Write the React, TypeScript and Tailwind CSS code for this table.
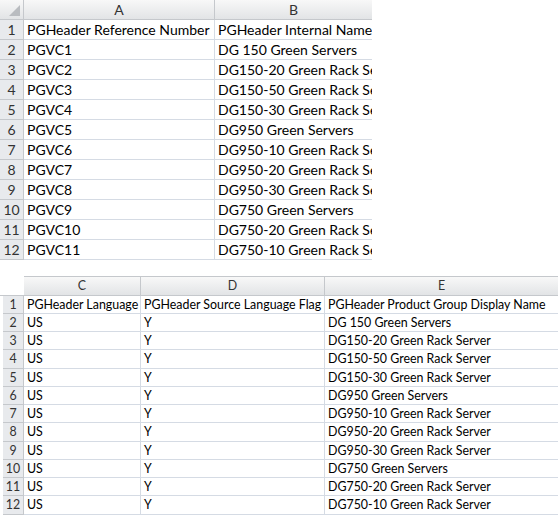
const rowsA = [
  ["PGHeader Reference Number", "PGHeader Internal Name"],
  ["PGVC1", "DG 150 Green Servers"],
  ["PGVC2", "DG150-20 Green Rack Server"],
  ["PGVC3", "DG150-50 Green Rack Server"],
  ["PGVC4", "DG150-30 Green Rack Server"],
  ["PGVC5", "DG950 Green Servers"],
  ["PGVC6", "DG950-10 Green Rack Server"],
  ["PGVC7", "DG950-20 Green Rack Server"],
  ["PGVC8", "DG950-30 Green Rack Server"],
  ["PGVC9", "DG750 Green Servers"],
  ["PGVC10", "DG750-20 Green Rack Server"],
  ["PGVC11", "DG750-10 Green Rack Server"],
];

const rowsB = [
  ["PGHeader Language", "PGHeader Source Language Flag", "PGHeader Product Group Display Name"],
  ...rowsA.slice(1).map((r) => ["US", "Y", r[1]]),
];

const hdr =
  "bg-gradient-to-b from-[#f8f8f8] to-[#e2e4e6] border-r border-b border-[#c5c8cc] text-center text-[#333]";
const side = "bg-[#e8eaed] border-r border-b border-[#c5c8cc] text-center text-[#333]";
const cell = "border-r border-b border-[#d5dbe4] pl-[3px] whitespace-nowrap overflow-hidden";

export default function App() {
  return (
    <div className="w-[558px] h-[517px] bg-white overflow-hidden text-black" style={{ fontFamily: "Lato, 'Open Sans', sans-serif" }}>
      {/* first sheet */}
      <div className="grid grid-cols-[24px_191px_157px] text-[14px] leading-[19px]">
        <div className={hdr + " h-[20px] relative"}>
          <div className="absolute right-[3px] bottom-[3px] w-0 h-0 border-l-[11px] border-l-transparent border-b-[11px] border-b-[#b9bcc0]" />
        </div>
        <div className={hdr + " h-[20px]"}>A</div>
        <div className={hdr + " h-[20px] border-r-0"}>B</div>
        {rowsA.map((r, i) => (
          <div key={i} className="contents">
            <div className={side + " h-[20px]"}>{i + 1}</div>
            <div className={cell + " h-[20px]"}>{r[0]}</div>
            <div className={cell + " h-[20px] border-r-0"}>{r[1]}</div>
          </div>
        ))}
      </div>

      {/* second sheet */}
      <div className="mt-[16px] grid grid-cols-[24px_117px_184px_233px] text-[12.4px] leading-[17px]">
        <div className="h-[20px] border-b border-[#c5c8cc]" />
        <div className={hdr + " h-[20px] border-t"}>C</div>
        <div className={hdr + " h-[20px] border-t"}>D</div>
        <div className={hdr + " h-[20px] border-t border-r-0"}>E</div>
        {rowsB.map((r, i) => {
          const h = i % 4 === 3 ? "h-[19px]" : "h-[18px]";
          return (
            <div key={i} className="contents">
              <div className={side + " ml-[3px] " + h}>{i + 1}</div>
              <div className={cell + " " + h}>{r[0]}</div>
              <div className={cell + " " + h}>{r[1]}</div>
              <div className={cell + " border-r-0 " + h}>{r[2]}</div>
            </div>
          );
        })}
      </div>
    </div>
  );
}
